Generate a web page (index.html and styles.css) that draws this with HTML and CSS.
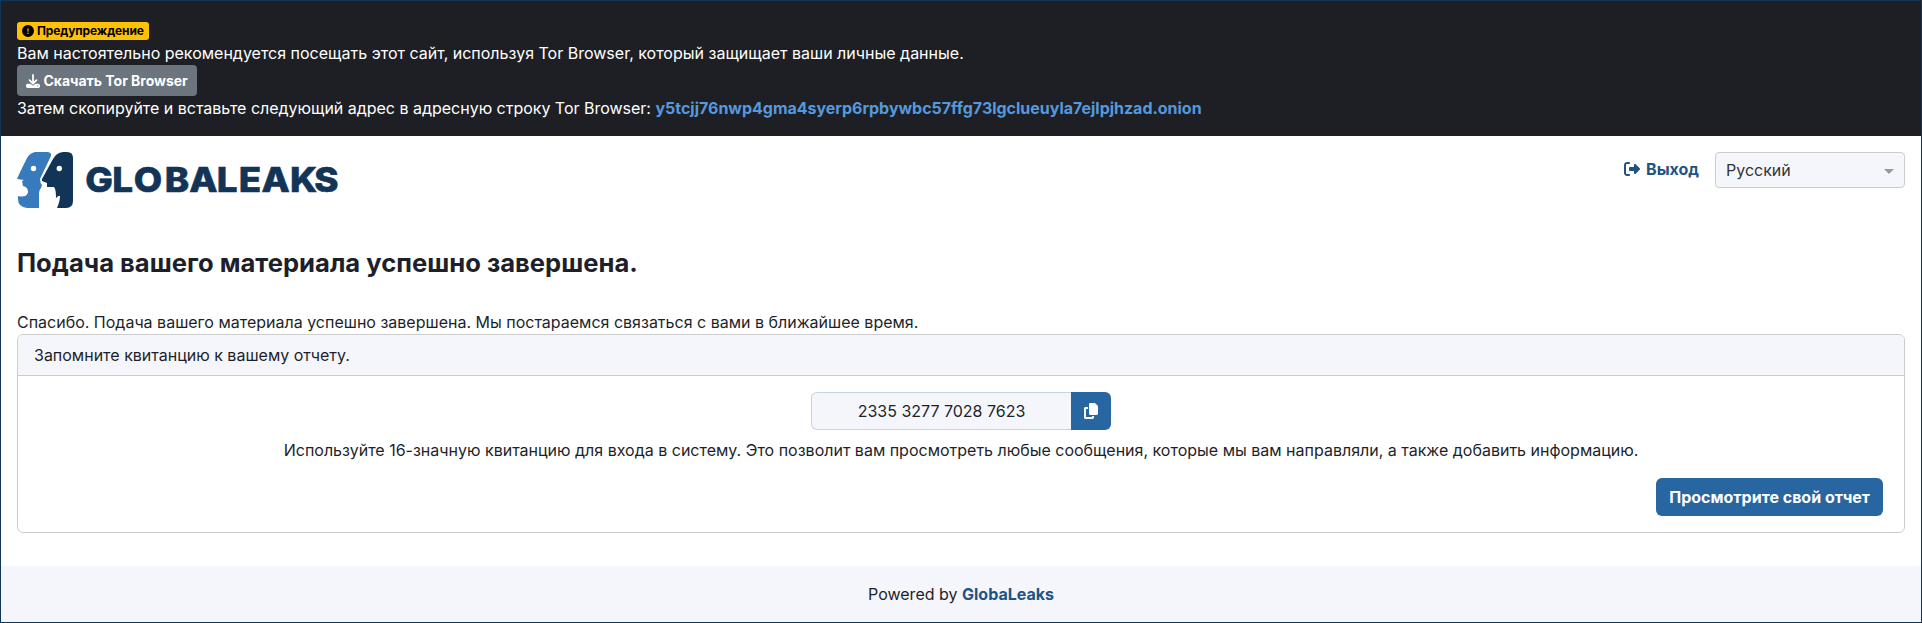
FILE: index.html
```html
<!DOCTYPE html>
<html lang="ru">
<head>
<meta charset="utf-8">
<title>GlobaLeaks</title>
<link rel="stylesheet" href="styles.css">
</head>
<body>
<div class="page">
  <section class="tor-banner">
    <div class="row"><span class="badge"><svg class="badge-icon" viewBox="0 0 512 512"><path fill="currentColor" d="M256 512A256 256 0 1 0 256 0a256 256 0 1 0 0 512zm0-384c13.3 0 24 10.7 24 24V264c0 13.3-10.7 24-24 24s-24-10.7-24-24V152c0-13.3 10.7-24 24-24zM224 352a32 32 0 1 1 64 0 32 32 0 1 1-64 0z"/></svg><span>Предупреждение</span></span></div>
    <div>Вам настоятельно рекомендуется посещать этот сайт, используя Tor Browser, который защищает ваши личные данные.</div>
    <button class="download"><svg class="download-icon" viewBox="0 0 512 512"><path fill="currentColor" d="M288 32c0-17.700-14.300-32-32-32s-32 14.300-32 32V274.700l-73.400-73.400c-12.500-12.500-32.800-12.500-45.300 0s-12.500 32.800 0 45.300l128 128c12.500 12.500 32.800 12.500 45.300 0l128-128c12.500-12.500 12.500-32.800 0-45.300s-32.800-12.500-45.300 0L288 274.700V32zM64 352c-35.300 0-64 28.700-64 64v32c0 35.300 28.700 64 64 64H448c35.300 0 64-28.700 64-64V416c0-35.300-28.700-64-64-64H346.500l-45.300 45.300c-25 25-65.500 25-90.500 0L165.500 352H64zm368 56a24 24 0 1 1 0 48 24 24 0 1 1 0-48z"/></svg><span>Скачать Tor Browser</span></button>
    <div class="address">Затем скопируйте и вставьте следующий адрес в адресную строку Tor Browser: <a class="onion">y5tcjj76nwp4gma4syerp6rpbywbc57ffg73lgclueuyla7ejlpjhzad.onion</a></div>
  </section>
  <header class="header">
    <svg class="logo" viewBox="0 0 322 56">
      <path fill="#377bbc" d="M18 0H31Q36 1 33 6L23 27Q23 31 25 33L24 36Q22 38 22 41V56H10Q1 55 1 47V44Q10 46 11 40Q11 35 6 34L5 29L7 28L0 27Q3 20 9 8Q12 1 18 0Z"/>
      <path fill="#123456" d="M46 0H50Q56 0 56 6V49Q56 56 49 56H40Q43 49 43 44Q42 43 39 46Q39 37 37 35H30V31L25 29V27L36 7Q39 1 46 0Z"/>
      <circle cx="16.500" cy="16.500" r="2.700" fill="#fff"/>
      <circle cx="42.300" cy="16.500" r="2.700" fill="#fff"/>
      <text class="logo-text" transform="scale(1.080 1)" y="39.700" x="63.300 88.200 108 136.800 159.600 185 205.300 226.500 252.700 275.200">GLOBALEAKS</text>
    </svg>
    <div class="tools">
      <a class="logout"><svg class="logout-icon" viewBox="0 0 512 512"><path fill="currentColor" d="M502.600 278.600c12.500-12.500 12.500-32.800 0-45.300l-128-128c-9.200-9.200-22.900-11.900-34.900-6.900s-19.800 16.600-19.800 29.600v64H192c-17.700 0-32 14.300-32 32v64c0 17.700 14.300 32 32 32H320v64c0 12.900 7.800 24.600 19.800 29.600s25.700 2.200 34.900-6.900l128-128zM160 96c17.700 0 32-14.300 32-32s-14.300-32-32-32H96C43 32 0 75 0 128V384c0 53 43 96 96 96h64c17.700 0 32-14.300 32-32s-14.300-32-32-32H96c-17.700 0-32-14.300-32-32V128c0-17.700 14.300-32 32-32h64z"/></svg><span>Выход</span></a>
      <div class="language"><span>Русский</span><span class="caret"></span></div>
    </div>
  </header>
  <main class="main">
    <h1 class="title">Подача вашего материала успешно завершена.</h1>
    <div>Спасибо. Подача вашего материала успешно завершена. Мы постараемся связаться с вами в ближайшее время.</div>
    <section class="card">
      <div class="card-header">Запомните квитанцию к вашему отчету.</div>
      <div class="card-body">
        <div class="receipt">
          <div class="receipt-code">2335 3277 7028 7623</div>
          <button class="copy" aria-label="Копировать"><svg class="copy-icon" viewBox="0 0 448 512"><path fill="currentColor" d="M208 0H332.100c12.700 0 24.900 5.100 33.900 14.100l67.900 67.900c9 9 14.100 21.200 14.100 33.900V336c0 26.500-21.500 48-48 48H208c-26.500 0-48-21.500-48-48V48c0-26.500 21.500-48 48-48zM48 128h80v64H64V448H256V416h64v48c0 26.500-21.500 48-48 48H48c-26.500 0-48-21.500-48-48V176c0-26.500 21.500-48 48-48z"/></svg></button>
        </div>
        <div class="hint">Используйте 16-значную квитанцию для входа в систему. Это позволит вам просмотреть любые сообщения, которые мы вам направляли, а также добавить информацию.</div>
        <button class="view">Просмотрите свой отчет</button>
      </div>
    </section>
  </main>
  <footer class="footer"><span>Powered by <a class="brand">GlobaLeaks</a></span></footer>
</div>
</body>
</html>
```
FILE: styles.css
```css
* { box-sizing: border-box; }
body {
  margin: 0;
  font: 16px/24px Inter, "Liberation Sans", sans-serif;
  color: #1d1f2a;
  background: #fff;
}
button { font-family: inherit; font-weight: 700; color: #fff; border: 0; padding: 0; }
.page {
  height: 623px;
  border: 1px solid #123456;
  display: flex;
  flex-direction: column;
}
.tor-banner {
  background: #1e1f24;
  color: #fff;
  padding: 16px;
  height: 135px;
  display: flex;
  flex-direction: column;
  align-items: flex-start;
}
.row { height: 24px; padding-top: 5px; display: flex; }
.badge {
  display: flex;
  align-items: center;
  gap: 3px;
  height: 18px;
  padding: 0 5px;
  border-radius: 3px;
  background: #ffc107;
  color: #000;
  font-size: 12px;
  font-weight: 700;
  line-height: 12px;
  letter-spacing: -0.11px;
}
.badge-icon { width: 12px; height: 12px; }
.download {
  height: 31px;
  padding: 0 9px;
  border-radius: 4px;
  background: #6c757d;
  font-size: 14px;
  line-height: 21px;
  display: flex;
  align-items: center;
  gap: 3.500px;
  letter-spacing: -0.020px;
}
.download-icon { width: 14px; height: 14px; }
.address { letter-spacing: -0.015px; }
.onion { font-weight: 700; color: #5599dd; }
.header {
  height: 72px;
  padding: 16px 16px 0;
  display: flex;
  justify-content: space-between;
  align-items: flex-start;
}
.logo { width: 322px; height: 56px; }
.logo-text {
  font-family: Inter, sans-serif;
  font-weight: 800;
  font-size: 34px;
  fill: #123456;
  stroke: #123456;
  stroke-width: 0.6;
}
.tools { display: flex; gap: 16px; align-items: flex-start; }
.logout {
  display: flex;
  align-items: center;
  gap: 6px;
  padding-top: 5px;
  font-weight: 700;
  color: #1f5383;
}
.logout-icon { width: 16px; height: 16px; }
.language {
  width: 190px;
  height: 36px;
  padding: 0 10px;
  border: 1px solid #ccc;
  border-radius: 4px;
  background: #f5f6fb;
  color: #333;
  display: flex;
  align-items: center;
  justify-content: space-between;
}
.caret { border: 5px solid transparent; border-top-color: #999; border-bottom: 0; margin-top: 3px; }
.main { padding: 0 16px; flex: 1; }
.title { margin: 39px 0 32px; font-size: 25.6px; line-height: 31px; font-weight: 700; }
.card { border: 1px solid #ccc; border-radius: 6px; overflow: hidden; height: 199px; }
.card-header { height: 41px; padding: 8px 16px; background: #f5f6fb; border-bottom: 1px solid #ccc; }
.card-body { padding: 16px; display: flex; flex-direction: column; align-items: center; }
.receipt { display: flex; width: 300px; height: 38px; }
.receipt-code {
  flex: 1;
  padding: 6px 12px;
  line-height: 24px;
  text-align: center;
  background: #f5f6fb;
  border: 1px solid #c8d3e2;
  border-right: 0;
  border-radius: 6px 0 0 6px;
}
.copy {
  width: 40px;
  background: #2866a2;
  border-radius: 0 6px 6px 0;
  display: flex;
  align-items: center;
  justify-content: center;
}
.copy-icon { width: 14px; height: 16px; }
.hint { margin-top: 8px; }
.view {
  align-self: flex-end;
  margin: 16px 5px 0 0;
  height: 38px;
  padding: 0 13px;
  border-radius: 6px;
  background: #2866a2;
  font-size: 16px;
}
.footer { height: 56px; background: #f5f6fb; display: flex; align-items: center; justify-content: center; }
.brand { font-weight: 700; color: #1f5383; }
```
